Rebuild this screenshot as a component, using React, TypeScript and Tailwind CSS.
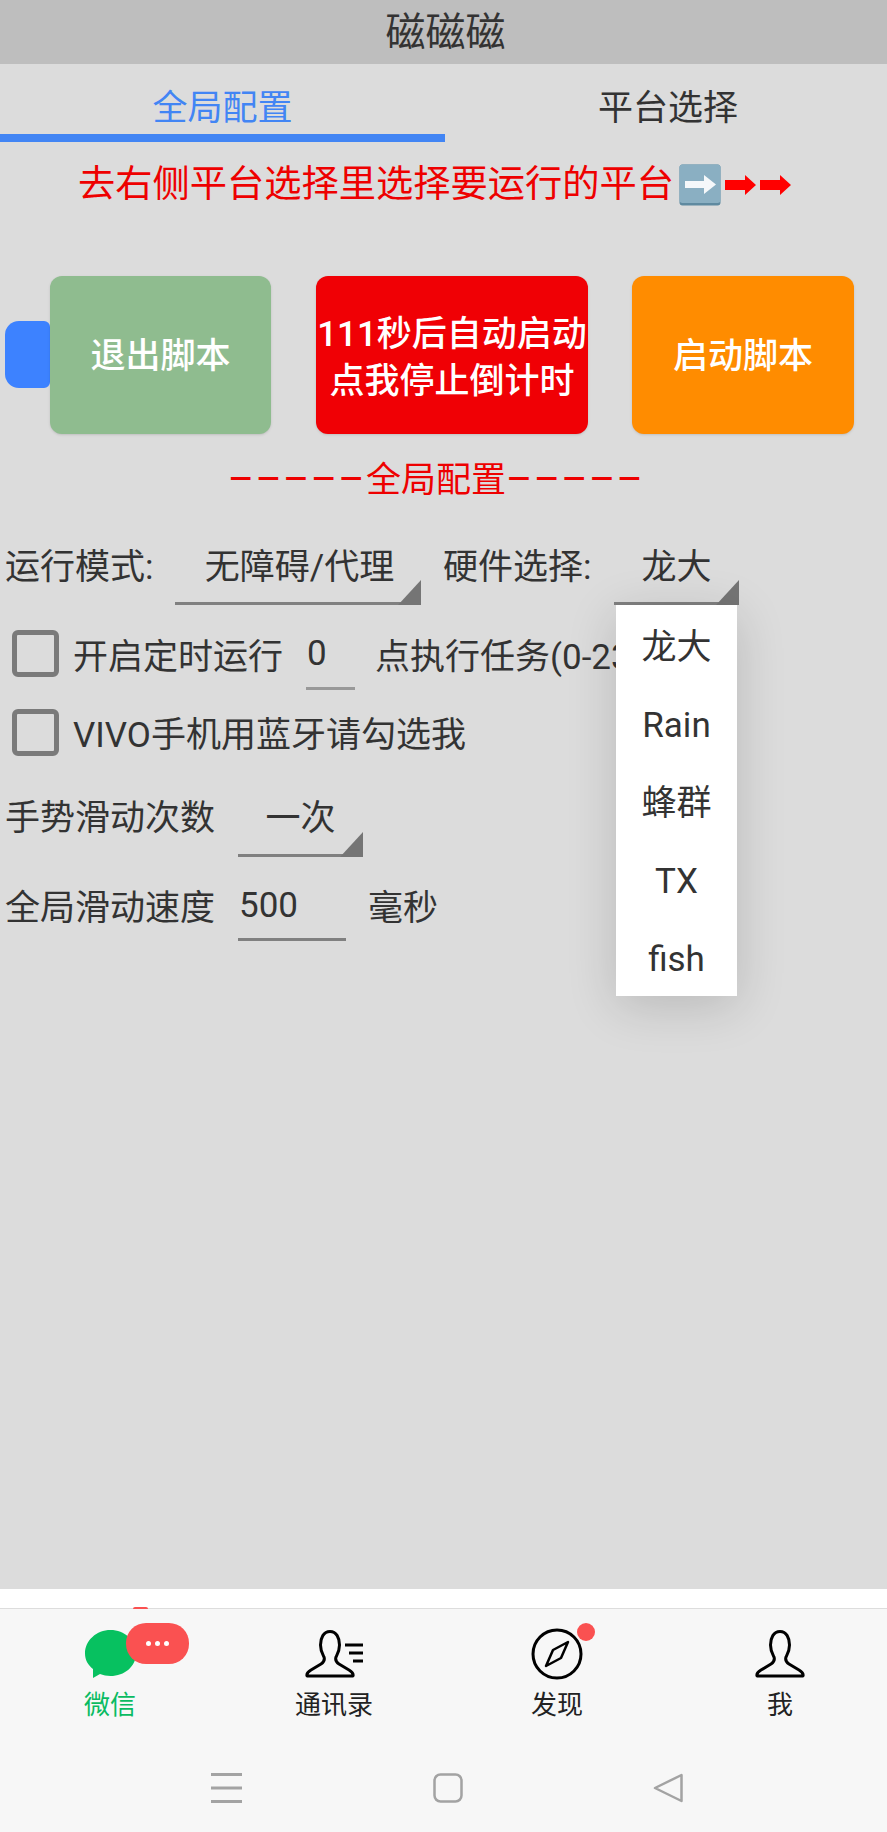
const SANS = "font-['Roboto','Noto_Sans_CJK_SC',sans-serif]";

function SelectBox({ text, className, children }: { text: string; className: string; children?: React.ReactNode }) {
  return (
    <div className={`relative shrink-0 h-[65px] border-b-[3px] border-[#808080] text-center leading-[56px] ${className}`}>
      {text}
      <div className="absolute right-0 bottom-[-3px] w-[23px] h-[25px] bg-[#757575] [clip-path:polygon(100%_0,100%_100%,0_100%)]" />
      {children}
    </div>
  );
}

function Check() {
  return <div className="shrink-0 ml-[12px] w-[47px] h-[47px] rounded-[6px] border-[5px] border-[#7a7a7a]" />;
}

function Person({ className = "" }: { className?: string }) {
  return (
    <svg viewBox="0 0 50 48" className={`w-[50px] h-[48px] ${className}`} fill="none" stroke="#000" strokeWidth="3" strokeLinejoin="round">
      <path d="M25 1.500C18.500 1.500 15.500 8 15.500 15C15.500 21 17.500 24 19 27C20 30 19 32 16 34L6 40C2.500 42 1.500 44 2 46L48 46C48.500 44 47.500 42 44 40L34 34C31 32 30 30 31 27C32.500 24 34.500 21 34.500 15C34.500 8 31.500 1.500 25 1.500Z" />
    </svg>
  );
}

function Tab({ label, active, children }: { label: string; active?: boolean; children: React.ReactNode }) {
  return (
    <div className="flex flex-col items-center pt-[21px]">
      <div className="relative h-[50px] flex justify-center">{children}</div>
      <div className={`mt-[9px] text-[26px] leading-[32px] ${active ? "text-[#09bb62]" : "text-[#222]"}`}>{label}</div>
    </div>
  );
}

export default function App() {
  return (
    <div className={`relative flex flex-col w-[887px] h-[1832px] overflow-hidden bg-[#dcdcdc] text-[#333] text-[35px] ${SANS}`}>
      <header className="h-16 shrink-0 flex items-center justify-center pt-[2px] pl-[4px] bg-[#bebebe] text-[40px] text-[#333]">磁磁磁</header>

      <nav className="grid grid-cols-[445px_442px] h-[78px] shrink-0 text-[35px] leading-[40px]">
        <div className="flex justify-center items-center pt-[20px] border-b-[8px] border-[#4285f4] text-[#4285f4]">全局配置</div>
        <div className="flex justify-center items-center pt-[20px] pl-[4px] text-[#333] border-b-[8px] border-transparent">平台选择</div>
      </nav>

      <main className="flex-1 flex flex-col">
        <div className="h-[84px] flex items-center pl-[78px] pt-[1px] text-[37.25px] leading-none text-[#ee0000]">
          去右侧平台选择里选择要运行的平台
          <svg viewBox="0 0 42 42" className="w-[42px] h-[42px] ml-[5px]">
            <rect x="0.500" y="0.500" width="41" height="41" rx="3" fill="#5f8aa0" />
            <rect x="0.500" y="0.500" width="41" height="38.500" rx="3" fill="#8aafc2" />
            <path d="M6 17H25V11L37 20.500L25 30V24H6Z" fill="#f5f8fa" />
          </svg>
          <svg viewBox="0 0 31 20" className="w-[31px] h-[20px] ml-[4px]"><path d="M0 5H20V0L31 10L20 20V15H0Z" fill="#ff0000" /></svg>
          <svg viewBox="0 0 31 20" className="w-[31px] h-[20px] ml-[4px]"><path d="M0 5H20V0L31 10L20 20V15H0Z" fill="#ff0000" /></svg>
        </div>

        <div className="mt-[50px] h-[158px] flex items-center text-white text-[35px] font-medium">
          <div className="ml-[5px] w-[45px] h-[67px] -mt-[2px] rounded-l-[14px] rounded-r-[6px] bg-[#3d82ff]" />
          <div className="w-[221px] h-full pt-[5px] rounded-[12px] bg-[#8fbc8f] shadow-sm flex items-center justify-center">退出脚本</div>
          <div className="ml-[45px] w-[272px] h-full pt-[5px] rounded-[12px] bg-[#f00005] shadow-sm flex items-center justify-center text-center leading-[47px] whitespace-nowrap">
            <span>111秒后自动启动<br />点我停止倒计时</span>
          </div>
          <div className="ml-[44px] w-[222px] h-full pt-[5px] rounded-[12px] bg-[#ff8c00] shadow-sm flex items-center justify-center">启动脚本</div>
        </div>

        <div className="mt-[26px] h-[40px] flex items-center justify-center pr-[15px] text-[#ee0000] leading-none">
          <span className="text-[40px] tracking-[1.4px]">–––––</span>全局配置<span className="text-[40px] tracking-[1.4px]">–––––</span>
        </div>

        <div className="relative z-10 mt-[40px] h-[65px] flex items-start pl-[5px] leading-[56px]">
          <div className="w-[170px] shrink-0">运行模式:</div>
          <SelectBox text="无障碍/代理" className="w-[246px] pl-[3px]" />
          <div className="ml-[22px] w-[171px] shrink-0">硬件选择:</div>
          <SelectBox text="龙大" className="w-[125px]">
            <ul className="absolute left-[2px] top-[65px] w-[121px] pt-[2px] bg-white shadow-[0_10px_50px_rgba(0,0,0,0.16)]">
              <li className="h-[78px] leading-[82px]">龙大</li>
              <li className="h-[78px] leading-[82px]">Rain</li>
              <li className="h-[78px] leading-[82px]">蜂群</li>
              <li className="h-[78px] leading-[82px]">TX</li>
              <li className="h-[77px] leading-[82px]">fish</li>
            </ul>
          </SelectBox>
        </div>

        <div className="mt-[25px] h-[47px] flex items-center whitespace-nowrap">
          <Check />
          <div className="ml-[14px] pt-[9px]">开启定时运行</div>
          <div className="relative ml-[23px] w-[49px] h-[60px] pt-[1px] pl-[1px] border-b-[3px] border-[#999] leading-[46px] self-start">0</div>
          <div className="ml-[20px] pt-[9px]">点执行任务(0-23)</div>
        </div>

        <div className="mt-[32px] h-[47px] flex items-center whitespace-nowrap">
          <Check />
          <div className="ml-[14px] pt-[7px]">VIVO手机用蓝牙请勾选我</div>
        </div>

        <div className="mt-[36px] h-[65px] flex items-start pl-[5px] leading-[54px]">
          <div className="w-[233px] shrink-0">手势滑动次数</div>
          <SelectBox text="一次" className="w-[125px] !leading-[54px]" />
        </div>

        <div className="mt-[23px] h-[61px] flex items-start pl-[5px] leading-[58px]">
          <div className="w-[233px] shrink-0">全局滑动速度</div>
          <div className="w-[108px] h-[61px] pl-[1px] border-b-[3px] border-[#808080] shrink-0 leading-[52px]">500</div>
          <div className="ml-[22px]">毫秒</div>
        </div>
      </main>

      <div className="h-[19px] shrink-0 bg-white" />
      <footer className="relative h-[224px] shrink-0 bg-[#f7f7f7] border-t border-[#dddddd]">
        <div className="absolute left-[133px] top-[-2px] w-[15px] h-[2px] rounded-t-full bg-[#fa5151]" />
        <div className="grid grid-cols-[220px_228px_218px_228px] w-[894px] overflow-hidden">
          <Tab label="微信" active>
            <svg viewBox="0 0 51 48" className="w-[51px] h-[48px]">
              <path d="M25.500 0C39.500 0 51 10.500 51 23.500C51 36.500 39.500 46 25.500 46C22 46 18 45 15 44L8 48L8 39C3 35 0 30 0 23.500C0 10.500 11.500 0 25.500 0Z" fill="#07c160" />
            </svg>
            <div className="absolute left-[41px] top-[-7px] w-[63px] h-[41px] rounded-[20px] bg-[#fa5151] flex items-center justify-center gap-[4px]">
              <span className="w-[5px] h-[5px] rounded-full bg-white" />
              <span className="w-[5px] h-[5px] rounded-full bg-white" />
              <span className="w-[5px] h-[5px] rounded-full bg-white" />
            </div>
          </Tab>
          <Tab label="通讯录">
            <Person className="-ml-[8px]" />
            <svg viewBox="0 0 18 20" className="absolute left-[32px] top-[13px] w-[18px] h-[20px]" stroke="#000" strokeWidth="3">
              <path d="M0 2H18M4 10H18M8 18H18" />
            </svg>
          </Tab>
          <Tab label="发现">
            <svg viewBox="0 0 52 52" className="w-[52px] h-[52px] -mt-[2px]" fill="none" stroke="#000" strokeWidth="3">
              <circle cx="26" cy="26" r="24" />
              <path d="M37 14L30 30L15 38L22 22Z" strokeWidth="2.500" strokeLinejoin="round" />
            </svg>
            <div className="absolute left-[46px] top-[-7px] w-[18px] h-[18px] rounded-full bg-[#fa5151]" />
          </Tab>
          <Tab label="我">
            <Person />
          </Tab>
        </div>
        <div className="flex items-center mt-[52px] pl-[211px]">
          <svg viewBox="0 0 31 30" className="w-[31px] h-[30px]" stroke="#a3a3a3" strokeWidth="3"><path d="M0 1.500H31M0 15H31M0 28.500H31" /></svg>
          <svg viewBox="0 0 30 30" className="ml-[191px] w-[30px] h-[30px]" fill="none" stroke="#a3a3a3" strokeWidth="2.500"><rect x="1.500" y="1.500" width="27" height="27" rx="6" /></svg>
          <svg viewBox="0 0 30 30" className="ml-[190px] w-[30px] h-[30px]" fill="none" stroke="#a3a3a3" strokeWidth="2.500" strokeLinejoin="round"><path d="M28.500 2V28L2 15Z" /></svg>
        </div>
      </footer>
    </div>
  );
}
